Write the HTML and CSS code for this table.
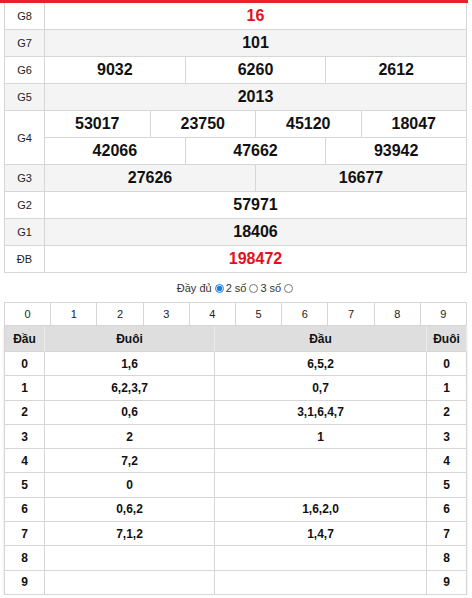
FILE: index.html
```html
<!DOCTYPE html>
<html lang="vi">
<head>
<meta charset="utf-8">
<link rel="stylesheet" href="styles.css">
</head>
<body>
<div class="wrap">
  <div class="inner">
    <div class="kq">
      <div class="row"><div class="lb">G8</div><div class="c red">16</div></div>
      <div class="row alt"><div class="lb">G7</div><div class="c">101</div></div>
      <div class="row"><div class="lb">G6</div><div class="c">9032</div><div class="c">6260</div><div class="c">2612</div></div>
      <div class="row alt"><div class="lb">G5</div><div class="c">2013</div></div>
      <div class="row tall">
        <div class="lb">G4</div>
        <div class="stack">
          <div class="sub"><div class="c">53017</div><div class="c">23750</div><div class="c">45120</div><div class="c">18047</div></div>
          <div class="sub"><div class="c">42066</div><div class="c">47662</div><div class="c">93942</div></div>
        </div>
      </div>
      <div class="row alt"><div class="lb">G3</div><div class="c">27626</div><div class="c">16677</div></div>
      <div class="row"><div class="lb">G2</div><div class="c">57971</div></div>
      <div class="row alt"><div class="lb">G1</div><div class="c">18406</div></div>
      <div class="row"><div class="lb">ĐB</div><div class="c red">198472</div></div>
    </div>

    <div class="opts">
      <span>Đầy đủ</span><input type="radio" name="m" class="rd" checked>
      <span>2 số</span><input type="radio" name="m" class="rd">
      <span>3 số</span><input type="radio" name="m" class="rd">
    </div>

    <div class="digits">
      <div class="d">0</div><div class="d">1</div><div class="d">2</div><div class="d">3</div><div class="d">4</div>
      <div class="d">5</div><div class="d">6</div><div class="d">7</div><div class="d">8</div><div class="d">9</div>
    </div>

    <div class="lt">
      <div class="lr head"><div>Đầu</div><div>Đuôi</div><div>Đầu</div><div>Đuôi</div></div>
      <div class="lr"><div>0</div><div>1,6</div><div>6,5,2</div><div>0</div></div>
      <div class="lr"><div>1</div><div>6,2,3,7</div><div>0,7</div><div>1</div></div>
      <div class="lr"><div>2</div><div>0,6</div><div>3,1,6,4,7</div><div>2</div></div>
      <div class="lr"><div>3</div><div>2</div><div>1</div><div>3</div></div>
      <div class="lr"><div>4</div><div>7,2</div><div></div><div>4</div></div>
      <div class="lr"><div>5</div><div>0</div><div></div><div>5</div></div>
      <div class="lr"><div>6</div><div>0,6,2</div><div>1,6,2,0</div><div>6</div></div>
      <div class="lr"><div>7</div><div>7,1,2</div><div>1,4,7</div><div>7</div></div>
      <div class="lr"><div>8</div><div></div><div></div><div>8</div></div>
      <div class="lr"><div>9</div><div></div><div></div><div>9</div></div>
    </div>
  </div>
</div>
</body>
</html>
```

FILE: styles.css
```css
* { box-sizing: border-box; }
body {
  margin: 0;
  background: #fff;
  font-family: Arial, "Liberation Sans", sans-serif;
  color: #111;
}
.wrap {
  width: 468px;
  border-top: 3px solid #ee1f26;
}
.inner {
  padding-left: 4px;
}
.kq {
  width: 463px;
  border-left: 1px solid #d6d6d6;
}
.row {
  display: flex;
  height: 27px;
}
.row.tall { height: 54px; }
.row.alt { background: #f4f4f4; }
.lb {
  width: 40px;
  flex: none;
  border-right: 1px solid #d6d6d6;
  border-bottom: 1px solid #d6d6d6;
  display: flex;
  align-items: center;
  justify-content: center;
  font-size: 11px;
  color: #222;
}
.c {
  flex: 1 1 0;
  border-right: 1px solid #d6d6d6;
  border-bottom: 1px solid #d6d6d6;
  display: flex;
  align-items: center;
  justify-content: center;
  font-size: 16px;
  font-weight: bold;
  color: #111;
}
.c.red { color: #e3101c; }
.stack {
  flex: 1;
  display: flex;
  flex-direction: column;
}
.sub {
  display: flex;
  height: 27px;
}
.opts {
  height: 29px;
  display: flex;
  align-items: center;
  justify-content: center;
  font-size: 11px;
  color: #333;
  padding-top: 1px;
}
.rd {
  width: 9px;
  height: 9px;
  margin: 0 2px 0 3px;
  accent-color: #1a7fe0;
}
.digits {
  width: 463px;
  display: grid;
  grid-template-columns: repeat(10, 1fr);
  border-left: 1px solid #d6d6d6;
  border-top: 1px solid #d6d6d6;
}
.d {
  height: 23px;
  border-right: 1px solid #d6d6d6;
  border-bottom: 1px solid #d6d6d6;
  display: flex;
  align-items: center;
  justify-content: center;
  font-size: 11px;
  color: #222;
}
.lt {
  width: 463px;
  border-left: 1px solid #d6d6d6;
  box-shadow: 0 1px 2px rgba(0,0,0,0.12);
}
.lr {
  display: grid;
  grid-template-columns: 40px 170px 212px 40px;
  height: 24.3px;
}
.lr > div {
  border-right: 1px solid #d6d6d6;
  border-bottom: 1px solid #d6d6d6;
  display: flex;
  align-items: center;
  justify-content: center;
  font-size: 12px;
  font-weight: bold;
  color: #111;
}
.lr.head {
  height: 26px;
  background: #dedede;
}
.lr.head > div {
  border-right-color: #ececec;
  border-bottom-color: #d6d6d6;
}
```
